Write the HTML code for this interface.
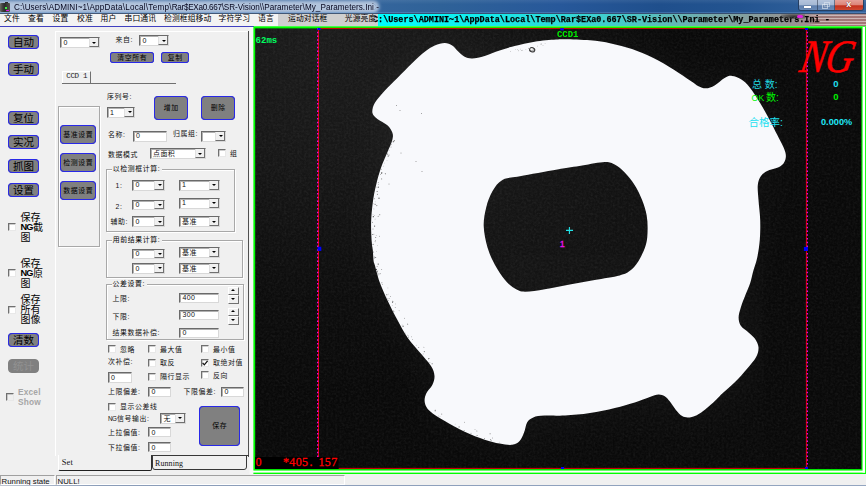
<!DOCTYPE html>
<html><head><meta charset="utf-8"><title>SR-Vision</title>
<style>
html,body{margin:0;padding:0}
body{width:866px;height:486px;overflow:hidden;position:relative;background:#f0f0f0;font-family:"Liberation Sans","Noto Sans CJK SC",sans-serif;}
body>div,body>span,body>svg{position:absolute}
.t{white-space:nowrap;line-height:1.25;}
.l,.gl{letter-spacing:0.6px}
.l{margin-top:1.2px}
.ck{margin-top:-0.4px}
.m{letter-spacing:0.1px}
#title{left:0;top:0;width:866px;height:13.6px;z-index:2;background:linear-gradient(90deg,#3b6aa0 0,#34659c 380px,#2f6298 440px,#27589a 560px,#1f4f8c 660px,#235490 740px,#2d5d98 800px,#35639c 866px);overflow:hidden}
#tglow{position:absolute;left:0;top:0;width:866px;height:13.6px;background:linear-gradient(180deg,rgba(255,255,255,.08) 0,rgba(255,255,255,0) 30%,rgba(255,255,255,0) 88%,rgba(120,170,225,.75) 91%,rgba(120,170,225,.6) 95%,rgba(40,50,70,.9) 97%,rgba(50,60,80,.9) 100%)}
#tglow2{position:absolute;left:-8px;top:4.3px;width:384px;height:5.6px;background:rgba(190,205,227,.92);border-radius:4px;box-shadow:0 0 3.5px 3.2px rgba(190,205,227,.92)}
#ticon{position:absolute;left:0;top:3px;width:10px;height:8.7px;background:linear-gradient(90deg,#6a6a64 0,#3a3a38 30%,#2c2c2a 50%,#55554e 100%);border-radius:1px}
#ticon:before{content:"";position:absolute;left:5px;top:-1.2px;width:3.4px;height:1.4px;background:#2a2a28}
#ticon i{position:absolute;left:4.8px;top:4px;width:2.2px;height:2px;background:#40f048}
#ticon:after{content:"";position:absolute;left:5.5px;top:6.6px;width:3.4px;height:1.7px;background:#e818e8;border-radius:1px}
#ttext{position:absolute;left:13.9px;top:1.9px;font-size:9.3px;line-height:11px;color:#04041c;white-space:nowrap;transform:scaleX(0.8745);transform-origin:0 0}
#wbtn{position:absolute;left:798.2px;top:0;width:65.6px;height:11.3px;border:1px solid rgba(30,40,60,.6);border-top:none;border-radius:0 0 3px 3px;overflow:hidden;box-sizing:border-box;display:flex}
.wb{height:11px;position:relative;box-sizing:border-box;border-right:1px solid rgba(30,40,60,.5);background:linear-gradient(180deg,#b4c4dc 0,#a4b8d4 45%,#5f80ae 52%,#6c8cb8 100%)}
.wb.mn{width:18.5px}.wb.mx{width:17px}
.wb.cl{flex:1;border-right:none;background:linear-gradient(180deg,#e4a098 0,#dc8478 45%,#c4301c 52%,#d05038 100%);color:#fff;font-weight:bold;font-size:9px;line-height:9px;text-align:center;text-shadow:0 0 1px #400}
.wb.mn i{position:absolute;left:5px;top:6px;width:7px;height:2px;background:#fff;box-shadow:0 0 1px #333}
.wb.mx i{position:absolute;left:4.5px;top:3.5px;width:4px;height:3.5px;border:1px solid #e8eef6;opacity:.6;background:rgba(120,140,170,.6)}
.wb.mx:before{content:'';position:absolute;left:6.5px;top:1.5px;width:4px;height:3.5px;border:1px solid #e8eef6;opacity:.5}
#menu{left:0;top:13px;width:278px;height:13px;background:#f3f3f3}
#tool{left:278px;top:13px;width:99.5px;height:13px;background:#cfcfcf}
#cy{left:374.6px;top:13px;width:491.4px;height:13px;background:linear-gradient(90deg,rgba(0,255,255,0) 0,rgba(0,255,255,0) 3.2px,#00ffff 3.2px,#18e8e8 120px,#48c8c8 250px,#78a8a8 340px,#8e9696 400px,#a48e8e 440px,#b08a8a 495px);overflow:hidden;box-sizing:border-box}
#cy span{z-index:1;position:absolute;left:-1.2px;top:2.1px;font-family:"Liberation Mono",monospace;font-weight:bold;font-size:8.6px;line-height:10px;color:#000;white-space:nowrap;transform:scaleX(0.984);transform-origin:0 0;-webkit-text-stroke:0.25px #000}
#blob{left:781px;top:13.5px;width:24px;height:5.5px;background:radial-gradient(ellipse at 55% 50%,rgba(40,40,40,.85) 0,rgba(60,60,60,.6) 50%,rgba(90,90,90,0) 100%);z-index:3}
#blob i{position:absolute;left:16px;top:1.5px;width:6px;height:3px;background:#e020e0;border-radius:1.5px}
#cy:before{content:'';position:absolute;left:432px;top:1.6px;width:67px;height:11.4px;background:repeating-linear-gradient(180deg,rgba(240,225,225,.5) 0,rgba(240,225,225,.5) 0.9px,rgba(130,50,50,.22) 1.3px,rgba(130,50,50,.22) 2.7px,rgba(240,225,225,.5) 3px);-webkit-mask-image:linear-gradient(90deg,transparent 0,#000 10px)}
#mline{left:0;top:26px;width:253.5px;height:0.9px;background:#4040c0}
.bt{box-sizing:border-box;border:1px solid #2828e8;background:#808080;color:#000;text-align:center;white-space:nowrap;overflow:hidden;box-shadow:0 0 0.5px #2020c0}
.bt.dis{border-color:#808080;color:#929292;box-shadow:none}
.ck{box-sizing:border-box;background:#fff;border:1px solid;border-color:#707070 #e8e8e8 #e8e8e8 #707070;box-shadow:inset 0.5px 0.5px 0 #a0a0a0}
.ck svg{position:absolute;left:-1px;top:-1px}
.sb{font-size:10px;line-height:10.1px;color:#000}
.sb b{font-weight:bold;font-size:9.2px;letter-spacing:-0.95px;line-height:9px;vertical-align:0.8px;margin-right:0.6px}
.ex{font-size:8.3px;line-height:10px;color:#a6a6a6;font-weight:bold;letter-spacing:0.2px}
#pnl{left:55px;top:30.5px;width:193px;height:425px;box-sizing:border-box;border-left:1px solid #fff;border-top:1px solid #fff}
#pr{left:248px;top:30.5px;width:1px;height:426px;background:#505050}
.cb,.in{box-sizing:border-box;background:#fff;border:1px solid;border-color:#6a6a6a #d8d8d8 #d8d8d8 #6a6a6a;box-shadow:inset 1px 1px 0 #b0b0b0}
.cb .v,.in .v{position:absolute;left:2.5px;top:-0.5px;font-size:7px;letter-spacing:0.4px;line-height:9px;color:#111;white-space:nowrap}
.cb .ar{position:absolute;right:0;top:0;bottom:0;width:10px;background:#f0f0f0;border-right:1px solid #707070;border-bottom:1px solid #707070;border-left:1px solid #e0e0e0;box-sizing:border-box}
.cb .ar b{position:absolute;left:2.5px;top:50%;margin-top:-0.5px;border:2px solid transparent;border-top:2.2px solid #000;border-bottom:none}
.gb{box-sizing:border-box;border:1px solid #a8a8a8;box-shadow:inset 1px 1px 0 #fff,1px 1px 0 #fff}
.gl{background:#f0f0f0;padding:0 2px 0 1px;color:#000;line-height:10px}
.sp{width:11px;height:17px}
.sp i{position:absolute;left:0;width:11px;height:8.3px;box-sizing:border-box;background:#f0f0f0;border:1px solid;border-color:#fff #707070 #707070 #fff}
.sp i.u{top:0}.sp i.d{top:8.6px}
.sp i b{position:absolute;left:2.7px;top:1.8px;border:2px solid transparent}
.sp i.u b{border-bottom:2.2px solid #000;border-top:none}
.sp i.d b{border-top:2.2px solid #000;border-bottom:none;top:2.2px}
#ccdtab{left:61.7px;top:70.8px;width:29.3px;height:12.7px;box-sizing:border-box;border-left:1px solid #fff;border-top:1px solid #fff;border-right:1px solid #707070;background:#f0f0f0}
#ccdtab span{position:absolute;left:3.5px;top:0.5px;font-size:7.5px;line-height:9px;font-family:"Liberation Mono",monospace;color:#222;white-space:nowrap;letter-spacing:-0.3px}
#ccdline{left:62px;top:83px;width:114px;height:1.1px;background:#707070}
#tabset{left:58px;top:455px;width:93.5px;height:15.6px;box-sizing:border-box;border:1px solid #303030;border-top:none;border-left:1px solid #fff;border-radius:0 0 2px 2px;background:#f0f0f0;border-bottom:1.5px solid #202020}
#tabset span,#tabrun span{position:absolute;left:2.8px;top:3px;font-size:8.4px;line-height:9px;font-family:"Liberation Serif",serif;color:#111;white-space:nowrap;letter-spacing:0.15px}
#tabrun{left:151.8px;top:455.2px;width:95px;height:14.8px;box-sizing:border-box;border:1px solid #383838;border-radius:0 0 3px 3px;background:#f0f0f0}
#pbl{left:151px;top:455.2px;width:98px;height:1px;background:#383838}
#tabrun span{top:3.3px;left:2.2px;font-size:7.9px}
#sbar{left:0;top:474px;width:866px;height:12px;background:#f0f0f0}
#sbar div{position:absolute;top:1px;height:9.5px;box-sizing:border-box;border:1px solid;border-color:#a0a0a0 #fff #fff #a0a0a0}
#sbar .s1{left:0;width:55px}#sbar .s2{left:56px;width:289px}#sbar .s3{display:none}#sbar .s4{left:345.5px;width:515px}
#sbar span{position:absolute;left:0.6px;top:0.5px;font-size:7.8px;line-height:9px;color:#111;white-space:nowrap}
#sbar:after{content:"";position:absolute;left:0;top:10.7px;width:866px;height:2px;background:linear-gradient(90deg,#c0c8d4 0,#8a9cb8 100px,#93a5c0 866px)}
#img{left:0;top:0}
.bt2{font-family:'Liberation Serif','Noto Serif CJK SC',serif;font-size:12px;line-height:13px;color:#ff0000;-webkit-text-stroke:0.3px #ff0000}
.bt2 i{display:inline-block;font-style:normal}
.bt2{letter-spacing:0.38px}.bt2 .g4{width:21px}.bt2 .g1{width:4px}.bt2 .dot{width:6px;text-align:left;padding-left:1px;box-sizing:border-box}
.o{line-height:1.15}
</style></head>
<body>
<div id="title"><div id="tglow2"></div><div id="tglow"></div><div id="ticon"><i></i></div><span id="ttext"><span style="letter-spacing:0.1px">C:\Users\ADMINI~1\</span><span style="letter-spacing:0.27px">AppData\Local\Temp\</span><span style="letter-spacing:-0.31px">Rar$EXa0.667\</span><span style="letter-spacing:0.0px">SR-Vision\\</span><span style="letter-spacing:0.05px">Parameter\My_Parameters.Ini -</span></span><div id="wbtn"><div class="wb mn"><i></i></div><div class="wb mx"><i></i></div><div class="wb cl">x</div></div></div>
<div id="menu"></div>
<div id="tool"></div>
<div id="blob"><i></i></div>
<div id="cy"><span>C:\Users\ADMINI~1\AppData\Local\Temp\Rar$EXa0.667\SR-Vision\\Parameter\My_Parameters.Ini -</span></div>
<span class="t m" style="left:4px;top:14.2px;font-size:7.8px;color:#000;">文件</span>
<span class="t m" style="left:28px;top:14.2px;font-size:7.8px;color:#000;">查看</span>
<span class="t m" style="left:52.5px;top:14.2px;font-size:7.8px;color:#000;">设置</span>
<span class="t m" style="left:77px;top:14.2px;font-size:7.8px;color:#000;">校准</span>
<span class="t m" style="left:100.5px;top:14.2px;font-size:7.8px;color:#000;">用户</span>
<span class="t m" style="left:124.5px;top:14.2px;font-size:7.8px;color:#000;">串口通讯</span>
<span class="t m" style="left:164px;top:14.2px;font-size:7.8px;color:#000;">检测框组移动</span>
<span class="t m" style="left:218.5px;top:14.2px;font-size:7.8px;color:#000;">字符学习</span>
<span class="t m" style="left:258px;top:14.2px;font-size:7.8px;color:#000;">语言</span>
<span class="t m" style="left:288px;top:14.2px;font-size:7.8px;color:#000;">运动对话框</span>
<span class="t m" style="left:344.8px;top:14.2px;font-size:7.8px;color:#000;">光源亮度</span>
<div id="mline"></div>
<div class="bt" style="left:8px;top:34.6px;width:31px;height:14px;border-radius:4px;font-size:10.5px;line-height:12px;">自动</div>
<div class="bt" style="left:8px;top:62px;width:31px;height:14px;border-radius:4px;font-size:10.5px;line-height:12px;">手动</div>
<div class="bt" style="left:8px;top:110.6px;width:31px;height:14px;border-radius:4px;font-size:10.5px;line-height:12px;">复位</div>
<div class="bt" style="left:8px;top:134.8px;width:31px;height:14px;border-radius:4px;font-size:10.5px;line-height:12px;">实况</div>
<div class="bt" style="left:8px;top:158.8px;width:31px;height:14px;border-radius:4px;font-size:10.5px;line-height:12px;">抓图</div>
<div class="bt" style="left:8px;top:182.8px;width:31px;height:14px;border-radius:4px;font-size:10.5px;line-height:12px;">设置</div>
<div class="bt" style="left:8px;top:333px;width:31px;height:14px;border-radius:4px;font-size:10.5px;line-height:12px;">清数</div>
<div class="bt dis" style="left:8px;top:359px;width:31px;height:14px;border-radius:4px;font-size:10.5px;line-height:12px;">统计</div>
<div class="ck" style="left:8px;top:223.5px;width:8px;height:8px"></div>
<span class="t sb" style="left:20.5px;top:213px">保存<br><b>NG</b>截<br>图</span>
<div class="ck" style="left:8px;top:269px;width:8px;height:8px"></div>
<span class="t sb" style="left:20.5px;top:258.5px">保存<br><b>NG</b>原<br>图</span>
<div class="ck" style="left:8px;top:306px;width:8px;height:8px"></div>
<span class="t sb" style="left:20.5px;top:295px">保存<br>所有<br>图像</span>
<div class="ck" style="background:#f0f0f0;left:5.5px;top:393px;width:8px;height:8px"></div>
<span class="t ex" style="left:18px;top:386.5px">Excel<br>Show</span>
<div id="pnl"></div>
<div id="pr"></div>
<div class="cb" style="left:60px;top:37px;width:39.8px;height:11px"><span class="v">0</span><i class="ar"><b></b></i></div>
<span class="t l" style="left:115.5px;top:35px;font-size:6.9px;color:#111;">来自:</span>
<div class="cb" style="left:139px;top:35px;width:30px;height:11px"><span class="v">0</span><i class="ar"><b></b></i></div>
<div class="bt" style="left:110px;top:52px;width:44px;height:11px;border-radius:3px;font-size:6.9px;line-height:9px;letter-spacing:0.6px;text-indent:0.6px">清空所有</div>
<div class="bt" style="left:161px;top:52px;width:28px;height:11px;border-radius:3px;font-size:6.9px;line-height:9px;letter-spacing:0.6px;text-indent:0.6px">复制</div>
<div id="ccdtab"><span>CCD 1</span></div><div id="ccdline"></div>
<span class="t l" style="left:107px;top:92px;font-size:6.9px;color:#111;">序列号:</span>
<div class="cb" style="left:106.5px;top:107px;width:28.5px;height:10.5px"><span class="v">1</span><i class="ar"><b></b></i></div>
<div class="bt" style="left:154px;top:96px;width:34px;height:24px;border-radius:4px;font-size:6.9px;line-height:22px;letter-spacing:0.6px;text-indent:0.6px">增加</div>
<div class="bt" style="left:201px;top:96px;width:34px;height:24px;border-radius:4px;font-size:6.9px;line-height:22px;letter-spacing:0.6px;text-indent:0.6px">删除</div>
<div class="gb" style="left:58px;top:105.8px;width:42px;height:141.5px"></div>
<div class="bt" style="left:60px;top:125px;width:36px;height:19px;border-radius:4px;font-size:6.9px;line-height:17px;letter-spacing:0.6px;text-indent:0.6px">基准设置</div>
<div class="bt" style="left:60px;top:153px;width:36px;height:19px;border-radius:4px;font-size:6.9px;line-height:17px;letter-spacing:0.6px;text-indent:0.6px">检测设置</div>
<div class="bt" style="left:60px;top:181px;width:36px;height:19px;border-radius:4px;font-size:6.9px;line-height:17px;letter-spacing:0.6px;text-indent:0.6px">数据设置</div>
<span class="t l" style="left:108px;top:130px;font-size:6.9px;color:#111;">名称:</span>
<div class="in" style="left:132.5px;top:130.5px;width:34.5px;height:11px"><span class="v">0</span></div>
<span class="t l" style="left:173px;top:129px;font-size:6.9px;color:#111;">归属组:</span>
<div class="cb" style="left:201px;top:130.5px;width:25px;height:11px"><span class="v"></span><i class="ar"><b></b></i></div>
<span class="t l" style="left:108px;top:149.5px;font-size:6.9px;color:#111;">数据模式</span>
<div class="cb" style="left:149.5px;top:148px;width:56px;height:11px"><span class="v">点面积</span><i class="ar"><b></b></i></div>
<div class="ck" style="left:218px;top:149.5px;width:8px;height:8px"></div>
<span class="t l" style="left:230px;top:149px;font-size:6.9px;color:#111;">组</span>
<div class="gb" style="left:105.8px;top:169px;width:129.2px;height:63.3px"></div>
<span class="t gl" style="left:111.8px;top:164px;font-size:6.9px">以检测框计算:</span>
<span class="t l" style="left:115.5px;top:181px;font-size:6.9px;color:#111;">1:</span>
<div class="cb" style="left:132px;top:179.8px;width:33px;height:10.8px"><span class="v">0</span><i class="ar"><b></b></i></div>
<div class="cb" style="left:178.5px;top:179.8px;width:41.3px;height:10.8px"><span class="v">1</span><i class="ar"><b></b></i></div>
<span class="t l" style="left:115.5px;top:201.5px;font-size:6.9px;color:#111;">2:</span>
<div class="cb" style="left:132px;top:199.6px;width:33px;height:10.8px"><span class="v">0</span><i class="ar"><b></b></i></div>
<div class="cb" style="left:178.5px;top:197.8px;width:41.3px;height:10.8px"><span class="v">1</span><i class="ar"><b></b></i></div>
<span class="t l" style="left:110.5px;top:216.5px;font-size:6.9px;color:#111;">辅助:</span>
<div class="cb" style="left:132px;top:216px;width:33px;height:11.2px"><span class="v">0</span><i class="ar"><b></b></i></div>
<div class="cb" style="left:178.5px;top:216px;width:41.3px;height:11.2px"><span class="v">基准</span><i class="ar"><b></b></i></div>
<div class="gb" style="left:105.8px;top:240.4px;width:137.2px;height:38px"></div>
<span class="t gl" style="left:111.8px;top:235.4px;font-size:6.9px">用前结果计算:</span>
<div class="cb" style="left:132px;top:248.5px;width:33px;height:10.7px"><span class="v">0</span><i class="ar"><b></b></i></div>
<div class="cb" style="left:178.5px;top:247px;width:41.3px;height:10.7px"><span class="v">基准</span><i class="ar"><b></b></i></div>
<div class="cb" style="left:132px;top:263px;width:33px;height:10.7px"><span class="v">0</span><i class="ar"><b></b></i></div>
<div class="cb" style="left:178.5px;top:263px;width:41.3px;height:10.7px"><span class="v">基准</span><i class="ar"><b></b></i></div>
<div class="gb" style="left:105.5px;top:284.4px;width:138px;height:56px"></div>
<span class="t gl" style="left:111.5px;top:279.4px;font-size:6.9px">公差设置:</span>
<span class="t l" style="left:112.5px;top:293.5px;font-size:6.9px;color:#111;">上限:</span>
<div class="in" style="left:179px;top:292.5px;width:40px;height:10.3px"><span class="v">400</span></div>
<span class="t l" style="left:112.5px;top:311.5px;font-size:6.9px;color:#111;">下限:</span>
<div class="in" style="left:179px;top:309.5px;width:40px;height:10.3px"><span class="v">300</span></div>
<span class="t l" style="left:112.5px;top:328px;font-size:6.9px;color:#111;">结果数据补偿:</span>
<div class="in" style="left:179px;top:327.8px;width:40px;height:10.3px"><span class="v">0</span></div>
<div class="sp" style="left:227.8px;top:286.7px"><i class="u"><b></b></i><i class="d"><b></b></i></div>
<div class="sp" style="left:227.8px;top:307.7px"><i class="u"><b></b></i><i class="d"><b></b></i></div>
<div class="ck" style="left:108px;top:345.5px;width:8px;height:8px"></div>
<span class="t l" style="left:120px;top:344.5px;font-size:6.9px;color:#111;">忽略</span>
<div class="ck" style="left:148px;top:345.5px;width:8px;height:8px"></div>
<span class="t l" style="left:160px;top:344.5px;font-size:6.9px;color:#111;">最大值</span>
<div class="ck" style="left:201px;top:345.5px;width:8px;height:8px"></div>
<span class="t l" style="left:213px;top:344.5px;font-size:6.9px;color:#111;">最小值</span>
<span class="t l" style="left:108px;top:357px;font-size:6.9px;color:#111;">次补偿:</span>
<div class="ck" style="left:148px;top:359px;width:8px;height:8px"></div>
<span class="t l" style="left:160px;top:358px;font-size:6.9px;color:#111;">取反</span>
<div class="ck" style="left:201px;top:359px;width:8px;height:8px"><svg viewBox="0 0 8 8" width="8" height="8"><path d="M1.6 3.8 L3.3 5.8 L6.6 1.8" fill="none" stroke="#111" stroke-width="1.3"/></svg></div>
<span class="t l" style="left:213px;top:358px;font-size:6.9px;color:#111;">取绝对值</span>
<div class="in" style="left:107.5px;top:372px;width:24px;height:10.5px"><span class="v">0</span></div>
<div class="ck" style="left:148px;top:373px;width:8px;height:8px"></div>
<span class="t l" style="left:160px;top:372px;font-size:6.9px;color:#111;">隔行显示</span>
<div class="ck" style="left:201px;top:371.5px;width:8px;height:8px"></div>
<span class="t l" style="left:213px;top:370.5px;font-size:6.9px;color:#111;">反向</span>
<span class="t l" style="left:108px;top:387px;font-size:6.9px;color:#111;">上限偏差:</span>
<div class="in" style="left:148px;top:386.5px;width:23px;height:10px"><span class="v">0</span></div>
<span class="t l" style="left:183.5px;top:387px;font-size:6.9px;color:#111;">下限偏差:</span>
<div class="in" style="left:221px;top:386.5px;width:23px;height:10px"><span class="v">0</span></div>
<div class="ck" style="left:108px;top:403px;width:8px;height:8px"></div>
<span class="t l" style="left:120px;top:402px;font-size:6.9px;color:#111;">显示公差线</span>
<span class="t l" style="left:108px;top:413.7px;font-size:6.9px;color:#111;"><span style="font-size:6.3px;letter-spacing:-0.5px;margin-right:0.6px">NG</span>信号输出:</span>
<div class="cb" style="left:160px;top:413px;width:25.6px;height:10.8px"><span class="v">无</span><i class="ar"><b></b></i></div>
<div class="bt" style="left:199px;top:406px;width:41px;height:40px;border-radius:4px;font-size:6.9px;line-height:38px;letter-spacing:0.6px;text-indent:0.6px">保存</div>
<span class="t l" style="left:108px;top:427.5px;font-size:6.9px;color:#111;">上拉偏值:</span>
<div class="in" style="left:148px;top:427px;width:23px;height:10px"><span class="v">0</span></div>
<span class="t l" style="left:108px;top:442.5px;font-size:6.9px;color:#111;">下拉偏值:</span>
<div class="in" style="left:148px;top:442px;width:23px;height:10px"><span class="v">0</span></div>
<div id="tabset"><span>Set</span></div><div id="tabrun"><span>Running</span></div><div id="pbl"></div>
<div id="sbar"><div class="s1"><span>Running state</span></div><div class="s2"><span>NULL!</span></div><div class="s3"></div></div>
<svg id="img" width="866" height="486" viewBox="0 0 866 486">
<defs>
<filter id="nz" x="0" y="0" width="100%" height="100%"><feTurbulence type="fractalNoise" baseFrequency="0.45" numOctaves="2" seed="3" result="n"/><feColorMatrix in="n" type="matrix" values="0 0 0 0 1  0 0 0 0 1  0 0 0 0 1  0.4 0.4 0.4 0 -0.45"/></filter>
<filter id="bl" x="-5%" y="-5%" width="110%" height="110%"><feGaussianBlur stdDeviation="0.7"/></filter>
<filter id="gw" x="-30%" y="-30%" width="160%" height="160%"><feGaussianBlur stdDeviation="26"/></filter>
<clipPath id="cp"><rect x="255.2" y="28.4" width="606.2" height="440.7"/></clipPath>
<radialGradient id="rg" gradientUnits="userSpaceOnUse" cx="320" cy="40" r="360"><stop offset="0" stop-color="#fff" stop-opacity="0.075"/><stop offset="0.35" stop-color="#fff" stop-opacity="0.055"/><stop offset="0.7" stop-color="#fff" stop-opacity="0.015"/><stop offset="1" stop-color="#fff" stop-opacity="0"/></radialGradient>
<path id="shp" d="M373.6,261.0C373.3,258.5 373.1,253.1 372.8,250.0C372.5,246.9 372.1,246.9 371.8,242.3C371.5,237.7 370.9,229.0 371.1,222.3C371.3,215.7 372.0,208.6 372.8,202.4C373.6,196.2 374.7,190.7 376.1,184.9C377.5,179.1 379.2,172.8 381.1,167.4C383.0,162.0 385.4,157.1 387.3,152.5C389.2,147.9 391.5,143.3 392.3,140.0C393.1,136.7 393.2,135.2 392.4,132.8C391.6,130.4 389.9,127.6 387.4,125.3C384.9,123.0 379.9,121.1 377.4,119.0C374.9,116.9 372.8,115.5 372.4,112.8C372.0,110.1 372.8,106.5 374.9,102.8C377.0,99.1 381.1,94.6 384.9,90.4C388.6,86.2 392.8,82.5 397.4,77.9C402.0,73.3 407.7,67.3 412.3,62.9C416.9,58.5 421.1,54.6 424.8,51.7C428.6,48.8 431.5,47.0 434.8,45.5C438.1,44.0 441.9,43.0 444.8,43.0C447.7,43.0 449.9,44.0 452.2,45.5C454.5,47.0 456.4,49.8 458.5,51.7C460.6,53.6 462.4,55.6 464.7,56.7C467.0,57.8 468.9,58.5 472.2,58.4C475.5,58.3 480.1,57.2 484.7,55.9C489.3,54.6 494.6,52.0 499.6,50.4C504.6,48.8 508.8,47.5 514.6,46.0C520.4,44.5 527.7,42.8 534.6,41.7C541.5,40.6 550.9,39.9 556.0,39.5C561.1,39.1 559.3,39.1 565.0,39.2C570.7,39.3 582.3,39.6 590.0,40.3C597.7,41.0 604.0,41.9 611.0,43.4C618.0,44.9 625.0,46.6 632.0,49.0C639.0,51.4 645.9,54.3 652.9,57.8C659.9,61.2 667.7,65.9 673.9,69.7C680.1,73.5 685.9,77.8 690.0,80.5C694.1,83.2 695.9,84.9 698.5,86.2C701.1,87.5 703.2,88.4 705.9,88.3C708.6,88.2 711.5,87.1 714.6,85.4C717.7,83.7 721.7,79.5 724.6,77.9C727.5,76.3 729.3,75.7 732.0,75.9C734.7,76.1 738.0,77.4 741.0,79.3C744.0,81.2 746.7,83.6 749.8,87.4C752.9,91.2 756.5,97.0 759.8,102.4C763.1,107.8 766.8,114.5 769.7,119.9C772.6,125.3 774.9,130.2 777.2,134.8C779.5,139.4 782.0,143.8 783.5,147.3C785.0,150.8 785.9,153.3 785.9,156.0C785.9,158.7 785.0,161.5 783.5,163.5C782.0,165.5 779.9,166.6 777.2,167.8C774.5,169.1 769.9,169.6 767.2,171.0C764.5,172.4 762.6,173.7 761.0,176.0C759.4,178.3 758.2,181.0 757.8,185.0C757.4,189.0 758.1,194.2 758.5,200.0C758.9,205.8 760.0,213.3 760.2,219.9C760.4,226.5 760.3,233.6 759.8,239.8C759.3,246.0 758.4,251.9 757.3,257.3C756.2,262.7 754.2,267.7 753.0,272.0C751.8,276.3 751.5,279.2 750.2,283.0C748.9,286.8 747.0,290.9 745.4,295.0C743.8,299.1 741.9,303.7 740.8,307.4C739.7,311.1 738.6,314.3 738.6,317.4C738.6,320.5 739.4,323.6 741.0,326.1C742.6,328.6 746.2,330.3 748.5,332.4C750.8,334.5 753.1,336.1 754.8,338.6C756.5,341.1 758.3,344.2 758.5,347.3C758.7,350.4 757.9,353.8 756.0,357.3C754.1,360.8 750.8,364.3 747.3,368.5C743.8,372.7 739.0,378.1 734.8,382.3C730.6,386.5 725.7,390.4 722.3,393.5C718.9,396.6 718.4,397.8 714.6,401.2C710.8,404.6 703.8,410.9 699.6,413.6C695.5,416.3 692.6,417.0 689.7,417.4C686.8,417.8 684.5,417.4 682.2,416.1C679.9,414.9 678.0,412.4 675.9,409.9C673.8,407.4 671.6,403.5 669.7,401.2C667.8,398.9 666.6,397.3 664.7,396.2C662.8,395.1 661.0,394.3 658.5,394.4C656.0,394.5 653.8,395.6 649.8,396.9C645.8,398.2 640.6,400.6 634.8,402.4C629.0,404.2 622.3,406.1 614.8,407.9C607.3,409.7 598.2,411.8 589.9,413.1C581.6,414.4 572.5,415.2 564.9,415.6C557.3,416.0 549.8,415.3 544.5,415.6C539.2,415.9 536.2,416.3 533.3,417.4C530.4,418.5 528.6,419.9 527.1,422.4C525.6,424.9 525.4,429.2 524.1,432.3C522.9,435.4 521.6,439.0 519.6,441.1C517.6,443.2 515.4,444.4 512.1,444.8C508.8,445.2 504.2,444.4 499.6,443.6C495.0,442.8 490.5,441.8 484.7,439.8C478.9,437.8 471.3,434.9 464.7,431.8C458.1,428.7 450.6,424.6 444.8,421.1C439.0,417.7 433.1,414.2 429.8,411.1C426.5,408.0 425.4,405.3 424.8,402.4C424.2,399.5 424.9,396.6 426.1,393.7C427.4,390.8 430.9,387.9 432.3,385.0C433.7,382.1 434.7,379.2 434.5,376.0C434.3,372.8 433.5,369.9 431.0,366.0C428.5,362.1 423.6,357.1 419.7,352.3C415.8,347.5 411.0,342.7 407.3,337.3C403.6,331.9 400.6,326.0 397.3,319.8C394.0,313.6 390.2,306.1 387.3,299.9C384.4,293.7 381.9,288.2 379.8,282.4C377.7,276.6 375.8,268.6 374.8,265.0C373.8,261.4 373.9,263.5 373.6,261.0ZM483.7,226.0C483.5,219.3 484.8,213.2 486.2,207.4C487.6,201.6 489.7,195.8 492.4,191.2C495.1,186.6 497.8,182.4 502.4,179.9C507.0,177.4 510.8,177.9 519.9,176.2C529.0,174.5 546.9,171.3 557.3,169.5C567.7,167.7 574.3,166.8 582.2,165.5C590.1,164.2 599.3,162.2 604.7,162.0C610.1,161.8 611.4,162.8 614.7,164.5C618.0,166.2 621.4,169.0 624.7,172.4C628.0,175.8 631.7,180.3 634.6,184.9C637.5,189.5 640.1,194.9 642.1,199.9C644.1,204.9 645.7,209.9 646.6,214.9C647.5,219.9 647.7,224.8 647.6,229.8C647.5,234.8 647.4,239.6 645.9,244.8C644.4,250.0 641.1,256.8 638.4,261.2C635.7,265.6 632.7,268.7 629.6,271.1C626.5,273.5 625.5,273.9 619.7,275.4C613.9,276.9 603.0,278.4 594.7,279.9C586.4,281.4 578.1,282.8 569.8,284.4C561.5,286.0 552.3,288.1 544.8,289.3C537.3,290.5 529.9,291.9 524.9,291.8C519.9,291.7 518.2,290.6 514.9,288.6C511.6,286.6 508.3,283.8 505.0,279.9C501.7,275.9 497.9,270.3 495.0,264.9C492.1,259.5 489.4,253.9 487.5,247.4C485.6,240.9 483.9,232.7 483.7,226.0Z"/>
<path id="sho" d="M374.0,261.0C371.3,248.0 369.8,237.7 371.0,222.0C372.2,206.3 377.5,181.8 381.0,167.0C384.5,152.2 393.5,142.0 392.0,133.0C390.5,124.0 371.2,122.2 372.0,113.0C372.8,103.8 386.5,89.2 397.0,78.0C407.5,66.8 424.8,50.3 435.0,46.0C445.2,41.7 449.7,50.3 458.0,52.0C466.3,53.7 472.2,57.7 485.0,56.0C497.8,54.3 517.5,44.7 535.0,42.0C552.5,39.3 570.3,37.3 590.0,40.0C609.7,42.7 635.0,50.3 653.0,58.0C671.0,65.7 686.0,82.7 698.0,86.0C710.0,89.3 716.3,77.8 725.0,78.0C733.7,78.2 741.3,77.5 750.0,87.0C758.7,96.5 771.3,122.2 777.0,135.0C782.7,147.8 786.7,157.2 784.0,164.0C781.3,170.8 765.0,166.7 761.0,176.0C757.0,185.3 761.3,204.0 760.0,220.0C758.7,236.0 756.2,257.5 753.0,272.0C749.8,286.5 741.8,297.0 741.0,307.0C740.2,317.0 745.5,323.7 748.0,332.0C750.5,340.3 760.3,346.7 756.0,357.0C751.7,367.3 733.0,384.0 722.0,394.0C711.0,404.0 698.7,415.8 690.0,417.0C681.3,418.2 676.7,404.3 670.0,401.0C663.3,397.7 663.3,395.0 650.0,397.0C636.7,399.0 609.5,409.7 590.0,413.0C570.5,416.3 544.7,412.3 533.0,417.0C521.3,421.7 528.0,437.2 520.0,441.0C512.0,444.8 500.0,445.0 485.0,440.0C470.0,435.0 438.8,420.2 430.0,411.0C421.2,401.8 433.7,394.8 432.0,385.0C430.3,375.2 427.5,366.2 420.0,352.0C412.5,337.8 394.7,315.2 387.0,300.0C379.3,284.8 376.7,274.0 374.0,261.0Z"/>
</defs>
<rect x="253.4" y="26.3" width="612.6" height="447.7" fill="#00ff00"/>
<rect x="862.6" y="27" width="2.5" height="445.6" fill="#fff"/>
<rect x="253" y="470.6" width="612" height="2" fill="#fff"/>
<rect x="249.5" y="27" width="3.5" height="447" fill="#f8f8f8"/>
<rect x="255.2" y="28.4" width="606.2" height="440.7" fill="#090909"/>
<g clip-path="url(#cp)">
<rect x="255" y="28" width="607" height="441" fill="url(#rg)"/>
<use href="#sho" fill="#fff" filter="url(#gw)" opacity="0.035"/>
<rect x="255" y="28" width="607" height="441" fill="#fff" filter="url(#nz)" opacity="0.13"/>
<use href="#shp" fill="#f8f9fc" fill-rule="evenodd" filter="url(#bl)"/>
<g id="spk"><circle cx="391.5" cy="144.2" r="0.35" fill="#555"/><circle cx="394.3" cy="140.7" r="0.6" fill="#777"/><circle cx="390.8" cy="145.1" r="0.35" fill="#888"/><circle cx="389.0" cy="150.4" r="0.4" fill="#888"/><circle cx="391.0" cy="147.0" r="0.4" fill="#555"/><circle cx="393.3" cy="141.7" r="0.6" fill="#555"/><circle cx="387.0" cy="160.5" r="0.35" fill="#888"/><circle cx="386.9" cy="154.4" r="0.35" fill="#888"/><circle cx="389.1" cy="155.1" r="0.5" fill="#999"/><circle cx="383.2" cy="166.1" r="0.4" fill="#777"/><circle cx="388.2" cy="156.0" r="0.6" fill="#444"/><circle cx="384.2" cy="163.0" r="0.35" fill="#555"/><circle cx="387.7" cy="154.0" r="0.5" fill="#444"/><circle cx="381.6" cy="178.9" r="0.6" fill="#999"/><circle cx="381.6" cy="173.6" r="0.5" fill="#555"/><circle cx="378.5" cy="184.2" r="0.35" fill="#555"/><circle cx="382.1" cy="172.8" r="0.5" fill="#999"/><circle cx="378.3" cy="182.6" r="0.5" fill="#999"/><circle cx="381.3" cy="169.3" r="0.45" fill="#777"/><circle cx="385.3" cy="173.8" r="0.5" fill="#555"/><circle cx="380.5" cy="174.6" r="0.4" fill="#444"/><circle cx="381.6" cy="172.5" r="0.45" fill="#444"/><circle cx="376.8" cy="187.1" r="0.4" fill="#777"/><circle cx="374.7" cy="198.8" r="0.45" fill="#555"/><circle cx="377.3" cy="194.3" r="0.45" fill="#777"/><circle cx="377.4" cy="194.2" r="0.35" fill="#444"/><circle cx="379.0" cy="198.2" r="0.6" fill="#444"/><circle cx="377.1" cy="191.4" r="0.5" fill="#555"/><circle cx="375.1" cy="201.8" r="0.35" fill="#999"/><circle cx="378.3" cy="187.2" r="0.6" fill="#555"/><circle cx="373.0" cy="214.2" r="0.4" fill="#888"/><circle cx="379.7" cy="214.7" r="0.6" fill="#999"/><circle cx="375.1" cy="204.3" r="0.5" fill="#444"/><circle cx="373.9" cy="203.7" r="0.45" fill="#999"/><circle cx="374.4" cy="215.7" r="0.4" fill="#888"/><circle cx="378.2" cy="216.3" r="0.6" fill="#999"/><circle cx="375.1" cy="219.1" r="0.45" fill="#888"/><circle cx="376.8" cy="205.6" r="0.6" fill="#888"/><circle cx="373.9" cy="208.9" r="0.4" fill="#777"/><circle cx="373.3" cy="216.7" r="0.6" fill="#444"/><circle cx="372.4" cy="222.3" r="0.45" fill="#444"/><circle cx="379.5" cy="236.3" r="0.5" fill="#999"/><circle cx="373.0" cy="229.0" r="0.4" fill="#444"/><circle cx="374.6" cy="226.1" r="0.6" fill="#555"/><circle cx="376.2" cy="235.5" r="0.35" fill="#555"/><circle cx="375.7" cy="237.6" r="0.5" fill="#777"/><circle cx="372.8" cy="234.6" r="0.5" fill="#444"/><circle cx="375.6" cy="240.5" r="0.4" fill="#777"/><circle cx="374.0" cy="234.1" r="0.4" fill="#888"/><circle cx="375.1" cy="241.7" r="0.45" fill="#777"/><circle cx="373.0" cy="244.7" r="0.35" fill="#888"/><circle cx="377.6" cy="245.4" r="0.35" fill="#999"/><circle cx="376.7" cy="251.6" r="0.45" fill="#999"/><circle cx="374.2" cy="258.0" r="0.45" fill="#444"/><circle cx="375.6" cy="257.5" r="0.6" fill="#777"/><circle cx="373.6" cy="252.1" r="0.5" fill="#777"/><circle cx="374.3" cy="256.9" r="0.4" fill="#444"/><circle cx="373.1" cy="244.3" r="0.6" fill="#888"/><circle cx="376.5" cy="269.4" r="0.6" fill="#555"/><circle cx="378.2" cy="264.1" r="0.6" fill="#444"/><circle cx="381.6" cy="269.5" r="0.5" fill="#999"/><circle cx="377.1" cy="266.6" r="0.45" fill="#444"/><circle cx="377.9" cy="270.3" r="0.4" fill="#888"/><circle cx="377.3" cy="271.7" r="0.6" fill="#777"/><circle cx="377.6" cy="273.1" r="0.5" fill="#999"/><circle cx="377.9" cy="275.0" r="0.45" fill="#555"/><circle cx="380.2" cy="273.5" r="0.45" fill="#777"/><circle cx="378.7" cy="273.9" r="0.35" fill="#444"/><circle cx="379.9" cy="274.0" r="0.4" fill="#777"/><circle cx="381.9" cy="282.8" r="0.5" fill="#777"/><circle cx="382.4" cy="284.5" r="0.45" fill="#888"/><circle cx="386.8" cy="294.7" r="0.6" fill="#888"/><circle cx="387.8" cy="298.9" r="0.4" fill="#555"/><circle cx="387.9" cy="287.9" r="0.4" fill="#999"/><circle cx="390.7" cy="296.6" r="0.45" fill="#444"/><circle cx="389.1" cy="298.4" r="0.45" fill="#555"/><circle cx="386.8" cy="297.0" r="0.35" fill="#999"/><circle cx="388.8" cy="294.1" r="0.35" fill="#888"/><circle cx="392.8" cy="301.2" r="0.5" fill="#555"/><circle cx="399.1" cy="310.7" r="0.45" fill="#888"/><circle cx="393.7" cy="310.3" r="0.35" fill="#777"/><circle cx="395.5" cy="303.9" r="0.45" fill="#888"/><circle cx="392.2" cy="305.6" r="0.4" fill="#999"/><circle cx="388.6" cy="300.6" r="0.35" fill="#555"/><circle cx="393.8" cy="311.5" r="0.5" fill="#777"/><circle cx="392.6" cy="302.2" r="0.5" fill="#444"/><circle cx="404.4" cy="318.3" r="0.45" fill="#777"/><circle cx="395.2" cy="307.3" r="0.4" fill="#444"/><circle cx="411.6" cy="336.8" r="0.35" fill="#555"/><circle cx="407.8" cy="335.1" r="0.35" fill="#555"/><circle cx="403.2" cy="326.2" r="0.45" fill="#888"/><circle cx="402.1" cy="324.9" r="0.4" fill="#999"/><circle cx="407.6" cy="324.2" r="0.6" fill="#999"/><circle cx="408.3" cy="335.9" r="0.45" fill="#777"/><circle cx="403.0" cy="326.2" r="0.6" fill="#777"/><circle cx="405.8" cy="333.1" r="0.35" fill="#777"/><circle cx="408.4" cy="337.2" r="0.45" fill="#777"/><circle cx="424.5" cy="351.3" r="0.4" fill="#888"/><circle cx="412.6" cy="339.6" r="0.4" fill="#555"/><circle cx="418.7" cy="347.4" r="0.5" fill="#888"/><circle cx="416.2" cy="345.2" r="0.35" fill="#888"/><circle cx="423.9" cy="347.2" r="0.4" fill="#555"/><circle cx="423.1" cy="353.9" r="0.35" fill="#444"/><circle cx="428.6" cy="358.7" r="0.6" fill="#777"/><circle cx="424.3" cy="351.6" r="0.6" fill="#888"/><circle cx="429.1" cy="358.6" r="0.5" fill="#999"/><circle cx="429.9" cy="362.4" r="0.4" fill="#777"/><circle cx="432.1" cy="363.7" r="0.5" fill="#555"/><circle cx="441.7" cy="414.1" r="0.55" fill="#999"/><circle cx="440.0" cy="416.5" r="0.35" fill="#777"/><circle cx="435.2" cy="410.0" r="0.45" fill="#999"/><circle cx="438.8" cy="415.9" r="0.35" fill="#777"/><circle cx="435.2" cy="410.7" r="0.55" fill="#555"/><circle cx="459.1" cy="426.9" r="0.55" fill="#777"/><circle cx="455.1" cy="424.1" r="0.35" fill="#999"/><circle cx="464.1" cy="430.5" r="0.45" fill="#555"/><circle cx="464.5" cy="422.3" r="0.45" fill="#777"/><circle cx="475.0" cy="429.3" r="0.35" fill="#555"/><circle cx="477.1" cy="435.5" r="0.55" fill="#777"/><circle cx="484.5" cy="438.5" r="0.55" fill="#999"/><circle cx="471.0" cy="433.2" r="0.45" fill="#555"/><circle cx="476.9" cy="431.0" r="0.45" fill="#555"/><circle cx="490.1" cy="433.8" r="0.55" fill="#777"/><circle cx="492.4" cy="438.0" r="0.45" fill="#777"/><circle cx="491.1" cy="440.3" r="0.45" fill="#555"/><circle cx="490.5" cy="439.5" r="0.45" fill="#555"/><circle cx="499.6" cy="442.1" r="0.35" fill="#999"/><circle cx="517.5" cy="49.6" r="0.45" fill="#999"/><circle cx="521.8" cy="50.4" r="0.45" fill="#777"/><circle cx="520.5" cy="49.1" r="0.45" fill="#999"/><circle cx="541.7" cy="43.9" r="0.45" fill="#777"/><circle cx="540.9" cy="44.1" r="0.45" fill="#777"/><circle cx="515.7" cy="49.6" r="0.45" fill="#aaa"/><circle cx="518.6" cy="50.7" r="0.45" fill="#999"/><circle cx="543.0" cy="45.5" r="0.45" fill="#aaa"/><circle cx="522.2" cy="50.3" r="0.45" fill="#aaa"/><circle cx="528.6" cy="48.3" r="0.45" fill="#777"/><circle cx="545.1" cy="43.6" r="0.45" fill="#aaa"/><circle cx="537.4" cy="46.1" r="0.45" fill="#999"/><circle cx="525.9" cy="49.6" r="0.45" fill="#aaa"/><circle cx="510.5" cy="51.4" r="0.45" fill="#999"/><circle cx="421.5" cy="113.5" r="0.5" fill="#888"/><circle cx="396.5" cy="105.5" r="0.5" fill="#888"/><circle cx="400" cy="110.5" r="0.5" fill="#888"/><circle cx="401" cy="153" r="0.5" fill="#888"/><circle cx="389" cy="184" r="0.5" fill="#888"/><circle cx="416" cy="161.5" r="0.5" fill="#888"/><circle cx="422" cy="171.5" r="0.5" fill="#888"/><ellipse cx="532.2" cy="49.8" rx="2.6" ry="2.1" fill="#b4b4b4" stroke="#383838" stroke-width="1.1" transform="rotate(20 532.2 49.8)"/><ellipse cx="531.6" cy="49.2" rx="1.3" ry="1" fill="#f4f4f4"/></g>
</g>
<path d="M318 28.4H806.8M338.5 468.4H806.8" stroke="#d80000" stroke-width="1" fill="none"/>
<path d="M318.5 28V469M806.4 28V469" stroke="#ff0000" stroke-width="0.9" fill="none"/>
<path d="M317.7 28V469M807.3 28V469" stroke="#ff00ff" stroke-width="1.2" stroke-dasharray="1.5 2.25" fill="none"/>
<g fill="#0000ff">
<rect x="317.5" y="28" width="3" height="2"/><rect x="805" y="28" width="3" height="2"/>
<rect x="317.6" y="246.7" width="3.7" height="4.2"/><rect x="803.9" y="246.9" width="4" height="4.1"/>
<rect x="317.5" y="467" width="3" height="2"/><rect x="805" y="467" width="3" height="2"/>
<rect x="560.3" y="28.3" width="3.5" height="2"/><rect x="561" y="467" width="3" height="2"/>
</g>
<path d="M566 230.4h7M569.4 227v7" stroke="#20e4e8" stroke-width="1.1" fill="none"/>
<rect x="255" y="457" width="83.5" height="12" fill="#000"/>
</svg>
<span class="t o" style="left:255.5px;top:35.5px;font-size:9px;color:#00ff60;font-family:'Liberation Mono',monospace;font-weight:bold;letter-spacing:0.05px">62ms</span>
<span class="t o" style="left:556.6px;top:28.6px;font-size:9.8px;color:#00f000;font-family:'Liberation Mono',monospace;font-weight:bold;transform:scaleX(0.91);transform-origin:0 0">CCD1</span>
<span class="t o" style="left:797.9px;top:33.5px;font-size:46.5px;color:#ff0000;font-family:'Liberation Serif',serif;font-style:italic;letter-spacing:-1px;line-height:46px;transform:skewX(-11deg) scaleX(0.845);transform-origin:0 85%;-webkit-text-stroke:0.5px #ff0000">NG</span>
<span class="t o" style="left:752px;top:79px;font-size:10px;color:#20d8e0;">总 数:</span>
<span class="t o" style="left:833.3px;top:79px;font-size:9.5px;color:#20e0f0;font-weight:bold">0</span>
<span class="t o" style="left:751.6px;top:91.5px;font-size:10px;color:#00f800;"><span style="font-size:8.6px;letter-spacing:0.2px">OK</span><span style="display:inline-block;width:1.6px"></span>数:</span>
<span class="t o" style="left:833.3px;top:91.5px;font-size:9.5px;color:#00f000;font-weight:bold">0</span>
<span class="t o" style="left:748.5px;top:115.7px;font-size:10.5px;color:#20e0f0;">合格率:</span>
<span class="t o" style="left:821px;top:116.8px;font-size:9.2px;color:#20e8f8;font-weight:bold">0.000%</span>
<span class="t o" style="left:559.8px;top:239.2px;font-size:9px;color:#f010f0;-webkit-text-stroke:0.3px #f010f0">1</span>
<span class="t o bt2" style="left:255.5px;top:456px">0<i class="g4"></i>*405<i class="dot">.</i><i class="g1"></i>157</span>
</body></html>
